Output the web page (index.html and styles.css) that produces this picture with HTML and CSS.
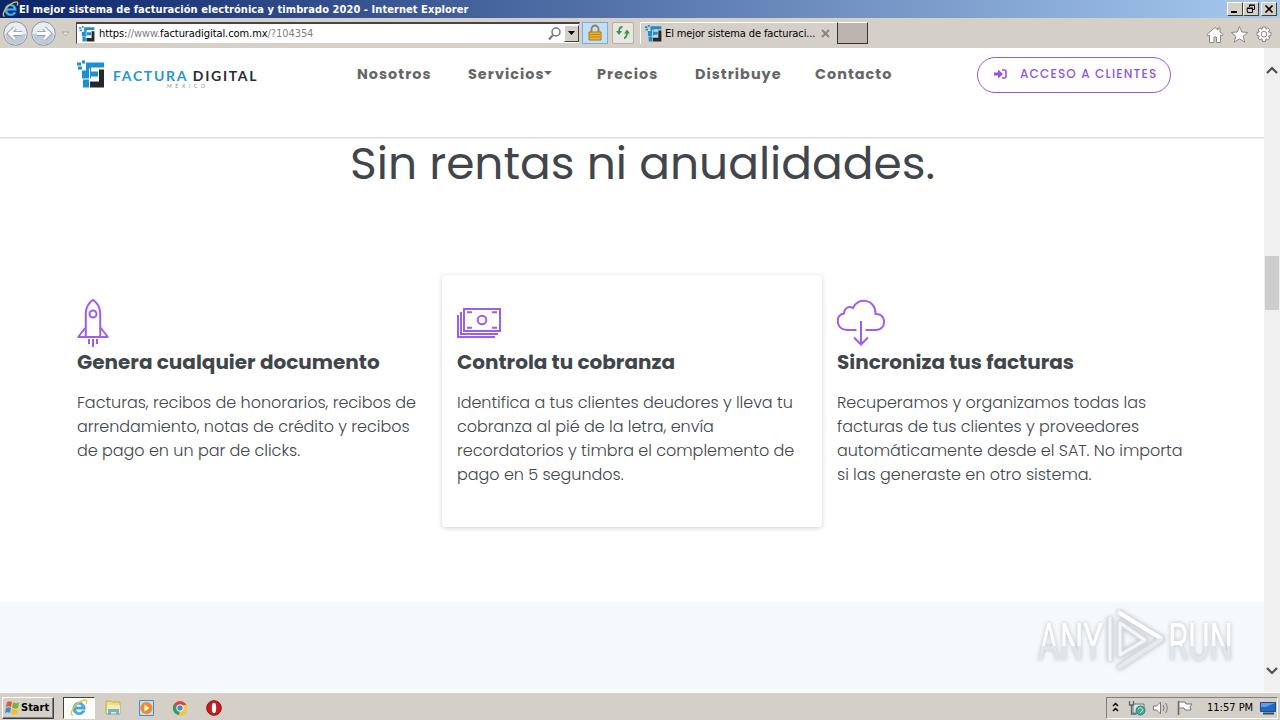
FILE: index.html
```html
<!DOCTYPE html>
<html lang="es">
<head>
	<meta charset="UTF-8">
	<title>El mejor sistema de facturación electrónica y timbrado 2020</title>
	<link rel="stylesheet" href="styles.css">
</head>
<body>
	<svg width="0" height="0" class="defs">
		<symbol id="mark" viewBox="0 0 28 28">
			<path fill="#1b8fd2" d="M0 2h4v3H0zM5 0h3v3H5zM1 6h4v3H1zM9 2h18v5H14v4h7v5h-7v2H5V9h4zM6 19h6v8H6z"/>
			<path fill="#fff" d="M5 8.500h4V10H5zM12 8h1v10h-1z"/>
			<path fill="#25282c" d="M22 9h5v18H13v-6h9z"/>
		</symbol>
		<symbol id="ie" viewBox="0 0 16 16">
			<path d="M13.600 9H5.200c.1 3.500 4.500 3.800 5.500 1.500h2.600C11.500 15.800 2.500 15 2.600 8.200 2.700 1 13.700.8 13.600 9zM5.300 7h5.300c-.3-3-5-3-5.300 0z" fill="#45aff0" stroke="#1d85cc" stroke-width=".4"/>
			<path d="M2.500 14.500C-1 14 3 6 8 3s8-3 6.300 1.200" fill="none" stroke="#f0c43c" stroke-width="1.200"/>
		</symbol>
	</svg>

	<div class="titlebar">
		<svg class="title-ie" width="17" height="17"><use href="#ie"/></svg>
		<span class="title-text">El mejor sistema de facturación electrónica y timbrado 2020 - Internet Explorer</span>
		<div class="win-btns">
			<span class="win-btn"><svg width="14" height="12"><path d="M3 9h6" stroke="#000" stroke-width="2"/></svg></span>
			<span class="win-btn"><svg width="14" height="12"><path d="M5.500 4V2.500h5v4H9M5 2h6" fill="none" stroke="#000"/><path d="M3 5.500h5.500v4h-5zM3 5h6" fill="none" stroke="#000"/></svg></span>
			<span class="win-btn close"><svg width="14" height="12"><path d="M3.500 2.500l7 7M10.500 2.500l-7 7" stroke="#000" stroke-width="1.700"/></svg></span>
		</div>
	</div>

	<div class="toolbar">
		<svg class="nav-arrows" width="72" height="30" viewBox="0 0 72 30">
			<g stroke="#8995a3" fill="#e7edf2">
				<circle cx="15.500" cy="15.500" r="11.800"/><circle cx="43.500" cy="15.500" r="11.800"/>
			</g>
			<path d="M5 16a10.500 10.500 0 0021 0zM33 16a10.500 10.500 0 0021 0z" fill="#bdcbd8"/>
			<path d="M22 15.500H10M15 10l-5.500 5.500L15 21M37 15.500h12M44 10l5.500 5.500L44 21" fill="none" stroke="#8a98a6" stroke-width="4.500"/>
			<path d="M22 15.500H10M15 10l-5.500 5.500L15 21M37 15.500h12M44 10l5.500 5.500L44 21" fill="none" stroke="#fff" stroke-width="2.800"/>
			<path d="M62 14h7l-3.500 4z" fill="#ece9e4" stroke="#aaa59b"/>
		</svg>
		<div class="address">
			<svg width="16" height="16"><use href="#mark"/></svg>
			<span class="url">https:<i>//www.</i>facturadigital.com.mx<i>/?104354</i></span>
			<svg class="lens" width="16" height="16"><circle cx="9" cy="6" r="4" fill="none" stroke="#777" stroke-width="1.500"/><path d="M6 9l-4 4.500" stroke="#777" stroke-width="2"/></svg>
			<span class="drop"><svg width="9" height="5"><path d="M1 0h7L4.500 4z"/></svg></span>
		</div>
		<span class="lock"><svg width="16" height="18"><path d="M4.500 8V5a3.500 3.500 0 017 0v3" fill="none" stroke="#98803f" stroke-width="1.800"/><path d="M2 8h12v8H2z" fill="#efb52e" stroke="#aa7514"/><path d="M3 10.500h10M3 13h10" stroke="#b97f18"/></svg></span>
		<span class="refresh"><svg width="18" height="16"><path d="M8.500 2Q5 2 5 7" fill="none" stroke="#35993f" stroke-width="1.800"/><path d="M2 6h6l-3 4z" fill="#35993f"/><path d="M10 13q3 0 3-6" fill="none" stroke="#35993f" stroke-width="1.800"/><path d="M10 8.500h6l-3-4z" fill="#35993f"/></svg></span>
		<div class="tab">
			<svg width="17" height="17"><use href="#mark"/></svg>
			<span class="tab-text">El mejor sistema de facturaci...</span>
			<svg class="tab-x" width="9" height="9"><path d="M1 1l7 7M8 1L1 8" stroke="#8b8680" stroke-width="2"/></svg>
		</div>
		<span class="new-tab"></span>
		<svg class="tools" width="72" height="22" viewBox="0 0 72 22">
			<g fill="#fff" stroke="#8b8781">
				<path d="M2 10.500l8-7 3 2.500V4h2v4l3 2.500-1 1.500-1.500-1v7.500h-4V13H9v5.500H4.500V11L3 12z"/>
				<path d="M34.500 2.500l2.300 5.500 6 .4-4.600 3.800 1.500 5.900-5.200-3.200-5.200 3.200 1.500-5.900-4.600-3.800 6-.4z"/>
				<path d="M57.500 3h3l.5 2.300 1.800-1.500 2 2L63.500 8l2.500.5v3l-2.500.5 1.300 2-2 2L61 14.700l-.5 2.800h-3l-.5-2.800L55 16l-2-2 1.400-2-2.400-.5v-3l2.400-.5L53 6l2-2 2 1.300z"/>
				<circle cx="59" cy="10.200" r="2.800"/>
			</g>
		</svg>
	</div>

	<div class="viewport">
		<div class="page">
			<header class="header">
				<div class="logo">
					<svg width="28" height="29"><use href="#mark"/></svg>
					<div class="logo-words">
						<div class="logo-name"><span class="blue">FACTURA</span> DIGITAL</div>
						<div class="logo-sub">MÉXICO</div>
					</div>
				</div>
				<nav class="menu">
					<a class="m1">Nosotros</a>
					<a class="m2">Servicios</a><span class="caret"></span>
					<a class="m3">Precios</a>
					<a class="m4">Distribuye</a>
					<a class="m5">Contacto</a>
				</nav>
				<a class="access">
					<svg width="13" height="10"><path d="M0 3.500h4V.5L9 5 4 9.500v-3H0z" fill="#9250ea"/><path d="M8 1h2.500q1.500 0 1.500 1.500v5Q12 9 10.500 9H8" fill="none" stroke="#9250ea" stroke-width="1.600"/></svg>
					<span>ACCESO A CLIENTES</span>
				</a>
			</header>

			<h1 class="headline">Sin rentas ni anualidades.</h1>

			<div class="features">
				<div class="feature">
					<svg class="icon" width="48" height="48" fill="none" stroke="#9c5ef0" stroke-width="2">
						<path d="M8.800 38V14Q9 6 16 .8 23 6 23.200 14v24M.5 38h31M9 28L1.500 37.500M23 28l7.500 9.500M12 40v5M16 40v8M20 40v5"/>
						<circle cx="16" cy="15" r="3.500"/>
					</svg>
					<h2>Genera cualquier documento</h2>
					<p>Facturas, recibos de honorarios, recibos de<br>arrendamiento, notas de crédito y recibos<br>de pago en un par de clicks.</p>
				</div>
				<div class="feature card">
					<svg class="icon" width="48" height="48" fill="none" stroke="#9c5ef0" stroke-width="2">
						<path d="M7 10h36v22H7zM4 13v22h37M1 16v22h37M10 13.200h5M35 13.200h5M10 28.800h5M35 28.800h5"/>
						<circle cx="25" cy="21" r="4.300"/>
					</svg>
					<h2>Controla tu cobranza</h2>
					<p>Identifica a tus clientes deudores y lleva tu<br>cobranza al pié de la letra, envía<br>recordatorios y timbra el complemento de<br>pago en 5 segundos.</p>
				</div>
				<div class="feature">
					<svg class="icon" width="48" height="48" fill="none" stroke="#9c5ef0" stroke-width="2">
						<path d="M19.500 31H10C-1.500 31-2 15 7 14.500 7 9 12 6.500 16 9 20-2 39-1 38.500 15 49.500 14 50.500 31 38.500 31H28.500M24 22v23.500M17 38.500l7 7 7-7"/>
					</svg>
					<h2>Sincroniza tus facturas</h2>
					<p>Recuperamos y organizamos todas las<br>facturas de tus clientes y proveedores<br>automáticamente desde el SAT. No importa<br>si las generaste en otro sistema.</p>
				</div>
			</div>

			<div class="band">
				<svg class="watermark" width="204" height="70" viewBox="0 0 204 70">
					<defs><linearGradient id="fade" x1="0" y1="0" x2="0" y2="1"><stop offset=".55" stop-color="#fff"/><stop offset=".55" stop-color="#e3e6e8"/></linearGradient></defs>
					<g class="wm-text" fill="url(#fade)">
						<text x="4" y="53" textLength="65" lengthAdjust="spacingAndGlyphs">ANY</text>
						<text x="134" y="53" textLength="65" lengthAdjust="spacingAndGlyphs">RUN</text>
					</g>
					<g class="wm-shape" fill="none">
						<path d="M76 10v44M86 16v32l25-15zM84 5l44 27-44 29" stroke="#d9dddf" stroke-width="6"/>
						<path d="M76 10v44M86 16v32l25-15z" stroke="#f4f6f7" stroke-width="3"/>
						<path d="M84 5l44 27" stroke="#fff" stroke-width="4"/>
						<path d="M128 32L84 61" stroke="#e7eaec" stroke-width="4"/>
					</g>
				</svg>
			</div>
		</div>
		<div class="scrollbar">
			<svg width="12" height="10"><path d="M1 8l5-5 5 5" fill="none" stroke="#505050" stroke-width="2.200"/></svg>
			<span class="thumb"></span>
			<svg class="down" width="12" height="10"><path d="M1 2l5 5 5-5" fill="none" stroke="#505050" stroke-width="2.200"/></svg>
		</div>
	</div>

	<div class="taskbar">
		<div class="start">
			<svg width="17" height="16"><path d="M3 2q3-1.500 5 0L7 7Q4.500 5.500 2 7z" fill="#e7572d"/><path d="M9 2.500q3 1.500 6 0L14 8q-3 1-6-.5z" fill="#72b43b"/><path d="M2 8q2.500-1.500 5 0l-1 5q-2.500-1.500-5 0z" fill="#3b8ad8"/><path d="M8 8.500q3 1.500 6 .5l-1 5q-3 1-6-.5z" fill="#f1bf2b"/></svg>
			<span>Start</span>
		</div>
		<div class="task-ie"><svg width="18" height="18"><use href="#ie"/></svg></div>
		<svg class="quick" width="120" height="20" viewBox="0 0 120 20">
			<path d="M1 3h5l1 1h8v12H1z" fill="#f0dc82" stroke="#c8aa4c"/><path d="M2 7h13v8H2z" fill="#f9ebad"/><path d="M3 17v-6h11v6h-3v-3H6v3z" fill="#65b6e0"/>
			<path d="M34.500 2.500h14v15h-14z" fill="#c3ddf5" stroke="#4b8dcc"/><circle cx="41.500" cy="10" r="6" fill="#f38a1c"/><path d="M39.500 6.500v7l5-3.500z" fill="#fff"/>
			<circle cx="75" cy="10" r="7" fill="#e04434"/><path d="M75 10L68.900 6.500A7 7 0 0074 17z" fill="#2ca24d"/><path d="M75 10l-1 7A7 7 0 0081.500 7H75z" fill="#f8cb2f"/><circle cx="75" cy="10" r="3.300" fill="#4287ec" stroke="#fff"/>
			<circle cx="109" cy="10" r="7.300" fill="#c61b21" stroke="#8e1015"/><ellipse cx="109" cy="10" rx="2.200" ry="5.200" fill="#fff"/>
		</svg>
		<div class="tray">
			<svg width="86" height="18" viewBox="0 0 86 18">
				<path d="M6 7l2.500-2.500L11 7M6 12l2.500-2.500L11 12" fill="none" stroke="#000" stroke-width="1.500"/>
				<path d="M26 5h11v9H26z" fill="#d6e8e8" stroke="#687777"/><path d="M22.500 2v4h4V2M24.500 6v9h5" fill="none" stroke="#666" stroke-width="1.300"/><circle cx="33.500" cy="11.500" r="4.500" fill="#47a99a" stroke="#2d8078"/><path d="M31 10q3-3 5 1l-3 3" fill="none" stroke="#b9e5cc"/>
				<path d="M46.500 7h3l4-4v12l-4-4h-3z" fill="#fff" stroke="#777"/><path d="M56 6q2 3 0 6M58.500 4q3.500 5 0 10" fill="none" stroke="#777"/>
				<path d="M71.500 2v14" stroke="#666" stroke-width="1.500"/><path d="M72 3h6l1 2h6l-2 3 1 3h-6l-1-2h-5z" fill="#fff" stroke="#777"/>
			</svg>
			<span class="clock">11:57 PM</span>
			<svg class="monitor" width="16" height="14"><path d="M.5 1.500h15v9H.5z" fill="#2568c3" stroke="#1c4c92"/><path d="M1 2h14L6 6H1z" fill="#5f9de0"/><path d="M3 12.500h11" stroke="#31466b" stroke-width="2"/></svg>
		</div>
	</div>
</body>
</html>
```
FILE: styles.css
```css
*{
	margin: 0;
	padding: 0;
	box-sizing: border-box;
}
body{
	width: 1280px;
	height: 720px;
	overflow: hidden;
	display: flex;
	flex-direction: column;
	background: #fff;
	font-family: "DejaVu Sans Condensed", "DejaVu Sans", sans-serif;
	font-stretch: condensed;
	font-size: 11px;
	white-space: nowrap;
}
svg{ display: block; flex: none; }
.defs{ position: absolute; }

/* window frame */
.titlebar{
	height: 18px;
	flex: none;
	display: flex;
	align-items: center;
	padding: 0 3px 0 2px;
	background: linear-gradient(90deg, #0a246a, #a6caf0);
	color: #fff;
}
.title-text{
	font-weight: bold;
	letter-spacing: .065px;
}
.win-btns{
	display: flex;
	margin-left: auto;
}
.win-btn{
	width: 16px;
	height: 14px;
	background: #d4d0c8;
	border: 1px solid;
	border-color: #fff #404040 #404040 #fff;
}
.close{ margin-left: 2px; }

.toolbar{
	height: 30px;
	flex: none;
	display: flex;
	align-items: center;
	background: #d4d0c8;
}
.nav-arrows{ margin-right: 4px; }
.address{
	width: 504px;
	height: 22px;
	display: flex;
	align-items: center;
	padding-left: 2px;
	background: #fff;
	border: 1px solid #d4d0c8;
	border-top: 2px solid #494249;
	border-left-color: #494249;
}
.url{
	margin-left: 4px;
	letter-spacing: -.07px;
}
.url i{ color: #808080; font-style: normal; }
.lens{ margin-left: auto; }
.drop{
	width: 15px;
	height: 17px;
	margin-left: 1px;
	display: flex;
	align-items: center;
	justify-content: center;
	background: #d4d0c8;
	border: 1px solid;
	border-color: #fff #404040 #404040 #fff;
}
.lock, .refresh{
	display: flex;
	align-items: center;
	justify-content: center;
	height: 22px;
}
.lock{
	width: 26px;
	margin-left: 2px;
	background: #c5def8;
	border: 1px solid #79aae2;
}
.refresh{
	width: 22px;
	margin-left: 4px;
	background: #e7e6e2;
	border: 1px solid #b5b1a9;
	border-radius: 2px;
}
.tab{
	width: 197px;
	height: 22px;
	margin-left: 6px;
	display: flex;
	align-items: center;
	padding-left: 4px;
	border-top: 1px solid #fff;
	border-left: 1px solid #fff;
}
.tab-text{ margin-left: 3px; letter-spacing: -.12px; }
.tab-x{ margin-left: auto; margin-right: 7px; }
.new-tab{
	width: 31px;
	height: 22px;
	background: #bcb4ad;
	border: 1px solid #333;
	border-top-color: #fff;
}
.tools{ margin: 4px 3px 0 auto; }

/* page */
.viewport{
	height: 644px;
	flex: none;
	display: flex;
}
.page{
	width: 1264px;
	display: flex;
	flex-direction: column;
	background: #fff;
	font-family: Poppins, Inter, sans-serif;
	font-stretch: normal;
	color: #40464b;
}
.header{
	height: 90px;
	flex: none;
	display: flex;
	align-items: flex-start;
	padding-left: 77px;
	border-bottom: 1px solid #dcdcde;
	box-shadow: 0 1px 1px #f1f1f1;
}
.logo{
	width: 280px;
	display: flex;
	padding-top: 12px;
}
.logo-words{
	padding: 8px 0 0 8px;
	font-family: Lato, sans-serif;
}
.logo-name{
	font-size: 14px;
	line-height: 16px;
	letter-spacing: 1.700px;
	font-weight: 700;
	color: #292b2f;
}
.blue{ color: #2595d4; }
.logo-sub{
	margin-left: 54px;
	font-size: 5px;
	line-height: 5px;
	letter-spacing: 3.700px;
	color: #888;
}
.menu{
	width: 620px;
	display: flex;
	padding-top: 16px;
	font-size: 14.400px;
	line-height: 20px;
	font-weight: 700;
	letter-spacing: 1.020px;
	color: #666;
}
.m1{ width: 111px; }
.m2{ width: 76px; }
.m3{ width: 98px; }
.m4{ width: 120px; }
.caret{
	width: 8px;
	height: 4px;
	margin: 7px 45px 0 0;
	flex: none;
	background: #666;
	clip-path: polygon(0 0, 100% 0, 50% 100%);
}
.access{
	width: 194px;
	height: 36px;
	margin-top: 9px;
	display: flex;
	align-items: center;
	gap: 13px;
	padding: 0 0 3px 16px;
	border: 1px solid #955bd8;
	border-radius: 18px;
	color: #9155df;
	font-size: 12px;
	font-weight: 500;
	letter-spacing: 1.170px;
}
.headline{
	height: 72px;
	margin: -10px 0 0 350px;
	font-size: 45.500px;
	line-height: 71px;
	font-weight: 400;
}
.features{
	display: flex;
	height: 252px;
	margin: 75px 0 0 62px;
}
.feature{
	width: 380px;
	padding: 24px 15px 0;
}
.card{
	background: #fff;
	border-radius: 4px;
	box-shadow: 0 1px 5px rgba(0,0,0,.2);
}
.feature h2{
	margin-top: 1px;
	font-size: 20px;
	line-height: 28px;
	font-weight: 700;
}
.feature p{
	margin-top: 15px;
	font-size: 16px;
	line-height: 24px;
	font-weight: 300;
	letter-spacing: -.03px;
}

.band{
	flex: 1;
	margin-top: 75px;
	background: #f5f9fc;
}
.watermark{
	margin: 5px 0 0 1034px;
	overflow: visible;
	filter: drop-shadow(0 0 2px rgba(90,100,110,.4));
}
.wm-text{
	font-family: Roboto, sans-serif;
	font-size: 52px;
	font-weight: 400;
}
.wm-shape{ stroke-linejoin: round; }

.scrollbar{
	width: 16px;
	display: flex;
	flex-direction: column;
	align-items: center;
	padding-top: 17px;
	background: #f0f0f0;
}
.thumb{
	width: 14px;
	height: 54px;
	margin-top: 181px;
	background: #cdcdcd;
}
.down{ margin: auto 0 16px; }

.taskbar{
	height: 28px;
	flex: none;
	display: flex;
	align-items: center;
	padding: 2px 2px 0;
	background: #d4d0c8;
	border-top: 1px solid #fff;
}
.start{
	width: 52px;
	height: 22px;
	display: flex;
	align-items: center;
	padding-left: 1px;
	border: 1px solid;
	border-color: #fff #404040 #404040 #fff;
	box-shadow: inset -1px -1px #808080;
	font-weight: bold;
}
.task-ie{
	width: 32px;
	height: 22px;
	margin-left: 9px;
	display: flex;
	align-items: center;
	justify-content: center;
	background: #fff;
	border: 1px solid;
	border-color: #404040 #fff #fff #404040;
}
.quick{ margin-left: 10px; }
.tray{
	width: 172px;
	height: 22px;
	margin-left: auto;
	display: flex;
	align-items: center;
	border: 1px solid;
	border-color: #808080 #fff #fff #808080;
}
.clock{ margin-left: 14px; }
.monitor{ margin-left: auto; margin-right: 1px; }
```
